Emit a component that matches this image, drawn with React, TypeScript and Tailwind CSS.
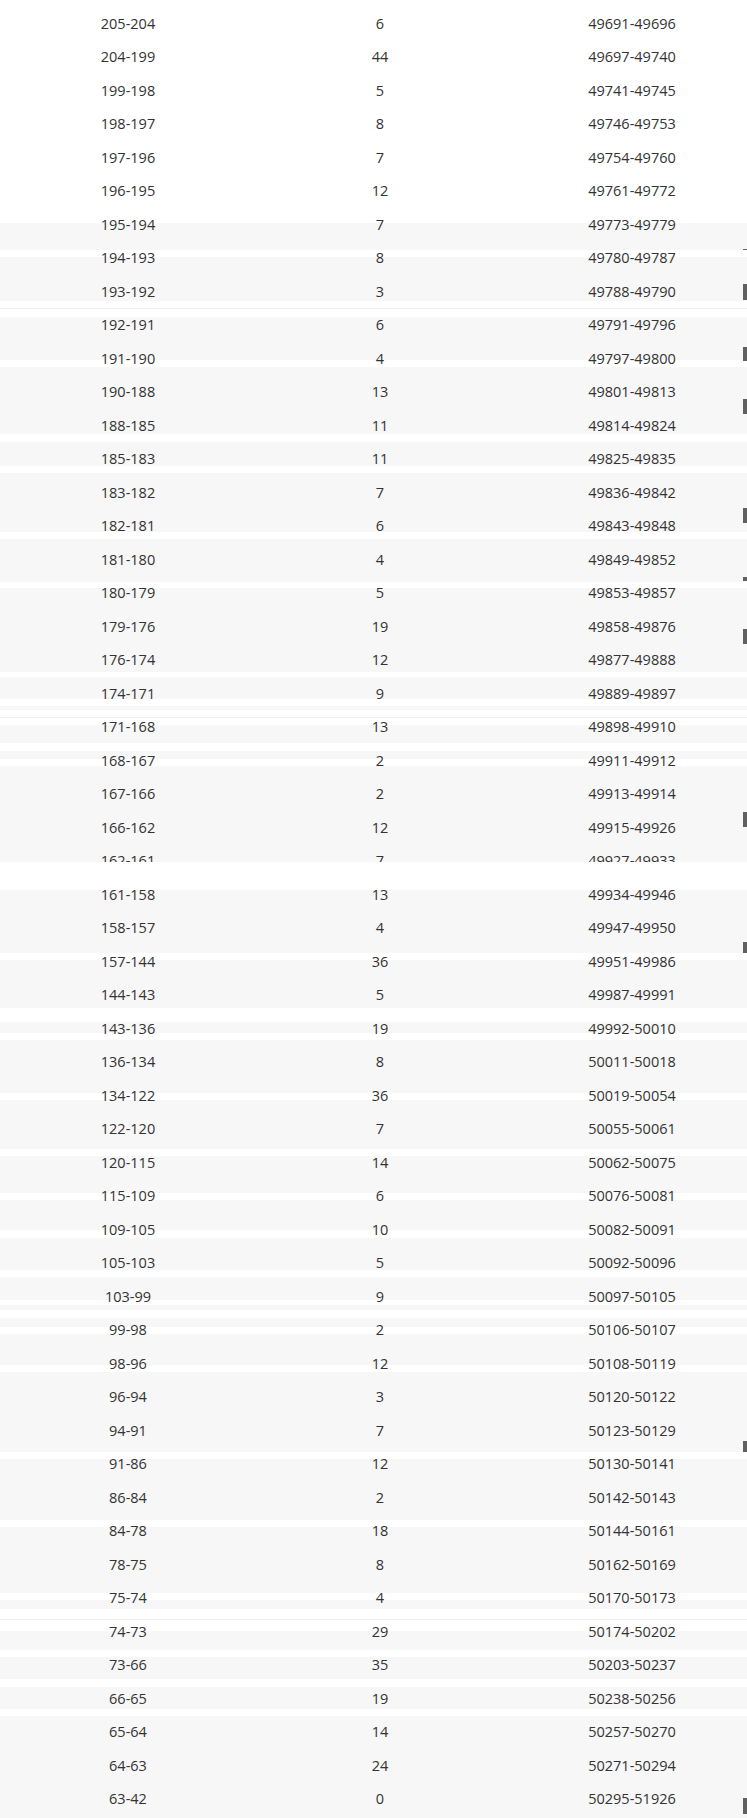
const rows: [string, string, string][] = [
  ["205-204", "6", "49691-49696"],
  ["204-199", "44", "49697-49740"],
  ["199-198", "5", "49741-49745"],
  ["198-197", "8", "49746-49753"],
  ["197-196", "7", "49754-49760"],
  ["196-195", "12", "49761-49772"],
  ["195-194", "7", "49773-49779"],
  ["194-193", "8", "49780-49787"],
  ["193-192", "3", "49788-49790"],
  ["192-191", "6", "49791-49796"],
  ["191-190", "4", "49797-49800"],
  ["190-188", "13", "49801-49813"],
  ["188-185", "11", "49814-49824"],
  ["185-183", "11", "49825-49835"],
  ["183-182", "7", "49836-49842"],
  ["182-181", "6", "49843-49848"],
  ["181-180", "4", "49849-49852"],
  ["180-179", "5", "49853-49857"],
  ["179-176", "19", "49858-49876"],
  ["176-174", "12", "49877-49888"],
  ["174-171", "9", "49889-49897"],
  ["171-168", "13", "49898-49910"],
  ["168-167", "2", "49911-49912"],
  ["167-166", "2", "49913-49914"],
  ["166-162", "12", "49915-49926"],
  ["162-161", "7", "49927-49933"],
  ["161-158", "13", "49934-49946"],
  ["158-157", "4", "49947-49950"],
  ["157-144", "36", "49951-49986"],
  ["144-143", "5", "49987-49991"],
  ["143-136", "19", "49992-50010"],
  ["136-134", "8", "50011-50018"],
  ["134-122", "36", "50019-50054"],
  ["122-120", "7", "50055-50061"],
  ["120-115", "14", "50062-50075"],
  ["115-109", "6", "50076-50081"],
  ["109-105", "10", "50082-50091"],
  ["105-103", "5", "50092-50096"],
  ["103-99", "9", "50097-50105"],
  ["99-98", "2", "50106-50107"],
  ["98-96", "12", "50108-50119"],
  ["96-94", "3", "50120-50122"],
  ["94-91", "7", "50123-50129"],
  ["91-86", "12", "50130-50141"],
  ["86-84", "2", "50142-50143"],
  ["84-78", "18", "50144-50161"],
  ["78-75", "8", "50162-50169"],
  ["75-74", "4", "50170-50173"],
  ["74-73", "29", "50174-50202"],
  ["73-66", "35", "50203-50237"],
  ["66-65", "19", "50238-50256"],
  ["65-64", "14", "50257-50270"],
  ["64-63", "24", "50271-50294"],
  ["63-42", "0", "50295-51926"],
]

// striped background, [height, kind]: w = white, g = grey stripe, l = hairline
const bands: [number, "w" | "g" | "l"][] = [
  [223, "w"], [27, "g"], [6.5, "w"], [44.5, "g"], [7, "w"], [1, "l"], [7.5, "w"],
  [43.5, "g"], [7, "w"], [67, "g"], [8, "w"], [24, "g"], [6.5, "w"], [59.5, "g"],
  [6.5, "w"], [43, "g"], [6, "w"], [84, "g"], [5.5, "w"], [21.5, "g"], [7, "w"],
  [4, "g"], [7, "w"], [1, "l"], [7.5, "w"], [17.5, "g"], [8, "w"], [8, "g"], [7, "w"],
  [103, "g"], [21.5, "w"], [63, "g"], [7, "w"], [47.5, "g"], [14.5, "w"], [10.5, "g"],
  [7.5, "w"], [52.5, "g"], [7.5, "w"], [49, "g"], [7, "w"], [37, "g"], [7, "w"],
  [30, "g"], [7.5, "w"], [32.5, "g"], [6.5, "w"], [23.5, "g"], [5, "w"], [5, "g"],
  [7.5, "w"], [9, "g"], [7.5, "w"], [30.5, "g"], [7, "w"], [80, "g"], [7.5, "w"],
  [61, "g"], [7, "w"], [66, "g"], [7, "w"], [8.5, "g"], [10, "w"], [1, "l"], [11.5, "w"],
  [19, "g"], [6.5, "w"], [22.5, "g"], [7.5, "w"], [22, "g"], [7, "w"], [102.5, "g"],
]

// things drawn over the rows: s = gap, m = scroll mark on the right edge, x = white block
const marks: [number, "s" | "m" | "x"][] = [
  [249, "s"], [1, "m"], [34, "s"], [15.5, "m"], [47, "s"], [14, "m"], [38, "s"],
  [15, "m"], [94.5, "s"], [15, "m"], [54, "s"], [4, "m"], [47.5, "s"], [15, "m"],
  [168.5, "s"], [15, "m"], [35, "s"], [28, "x"], [51.5, "s"], [11.5, "m"], [488, "s"],
  [11, "m"], [346, "s"], [16, "m"],
]

const bandClass = {
  w: "bg-white",
  g: "bg-[#f7f7f7]",
  l: "bg-[#f1f1f1]",
}

const markClass = {
  s: "",
  m: "ml-auto w-[4px] bg-[#606060]",
  x: "w-full bg-white",
}

export default function App() {
  return (
    <div className="grid w-[747px] overflow-hidden bg-white font-['Open_Sans',sans-serif] text-[14.5px] text-[#333]">
      <div className="col-start-1 row-start-1 flex flex-col">
        {bands.map(([h, kind], i) => (
          <div key={i} className={bandClass[kind]} style={{ height: h }} />
        ))}
      </div>

      <div className="col-start-1 row-start-1 flex flex-col pt-[7px]">
        {rows.map(([range, count, ids]) => (
          <div key={range} className="grid h-[33.5px] grid-cols-[256px_248px_243px] items-center leading-none">
            <div className="text-center">{range}</div>
            <div className="text-center">{count}</div>
            <div className="pl-[13px] text-center">{ids}</div>
          </div>
        ))}
      </div>

      <div className="pointer-events-none relative z-10 col-start-1 row-start-1 flex flex-col">
        {marks.map(([h, kind], i) => (
          <div key={i} className={markClass[kind]} style={{ height: h }} />
        ))}
      </div>
    </div>
  )
}
